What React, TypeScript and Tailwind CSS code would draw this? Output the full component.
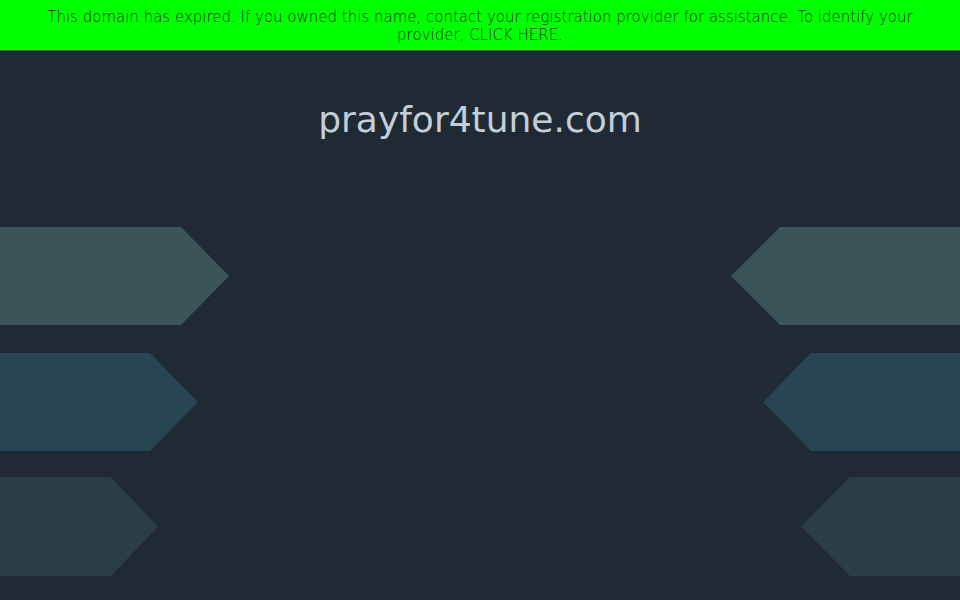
import React from "react";

/**
 * One row of arrow-shaped banners: one pointing right from the left edge,
 * one pointing left from the right edge.
 */
const ArrowRow: React.FC<{ left: string; right: string; color: string; className?: string }> = ({
    left,
    right,
    color,
    className = "",
}) => (
    <div className={`flex justify-between ${className}`}>
        <div className={`${left} ${color} h-full`} />
        <div className={`${right} ${color} h-full`} />
    </div>
);

const App: React.FC = () => {
    return (
        <div className="w-[960px] h-[600px] overflow-hidden bg-[#1f2a35] flex flex-col font-['DejaVu_Sans',sans-serif]">
            {/* Expiry notice */}
            <div className="h-[51px] bg-[#00ff00] pt-[8px] px-[40px] text-center text-[15px] leading-[18px] text-[#143214] font-['DejaVu_Sans_ExtraLight','DejaVu_Sans',sans-serif] font-extralight border-b border-[#4a5a4a]">
                This domain has expired. If you owned this name, contact your registration provider for assistance. To identify your provider, CLICK HERE.
            </div>

            <h1 className="mt-[47px] text-center text-[36px] leading-[44px] text-[#c5ced6]">
                prayfor4tune.com
            </h1>

            <div className="mt-[85px] flex flex-col">
                <ArrowRow
                    className="h-[98px]"
                    color="bg-[#3b5458]"
                    left="w-[229px] [clip-path:polygon(0_0,181px_0,229px_50%,181px_100%,0_100%)]"
                    right="w-[229px] [clip-path:polygon(49px_0,100%_0,100%_100%,49px_100%,0_50%)]"
                />
                <ArrowRow
                    className="h-[98px] mt-[28px]"
                    color="bg-[#274553]"
                    left="w-[198px] [clip-path:polygon(0_0,150px_0,198px_50%,150px_100%,0_100%)]"
                    right="w-[197px] [clip-path:polygon(48px_0,100%_0,100%_100%,48px_100%,0_50%)]"
                />
                <ArrowRow
                    className="h-[99px] mt-[26px]"
                    color="bg-[#2b3d46]"
                    left="w-[158px] [clip-path:polygon(0_0,111px_0,158px_50%,111px_100%,0_100%)]"
                    right="w-[159px] [clip-path:polygon(49px_0,100%_0,100%_100%,49px_100%,0_50%)]"
                />
            </div>
        </div>
    );
};

export default App;
